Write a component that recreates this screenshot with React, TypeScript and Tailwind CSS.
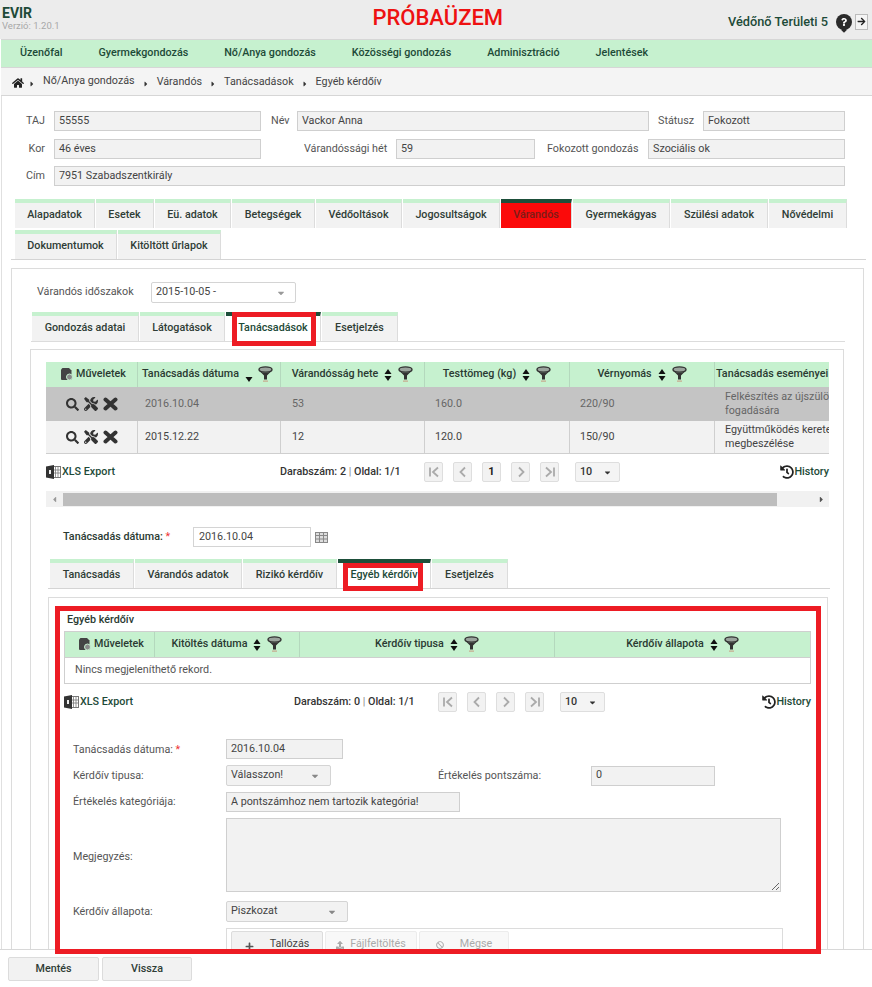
import React from "react";
import { FaHome, FaSearch, FaTools, FaHistory, FaPlus, FaUpload, FaBan, FaArrowRight, FaQuestion, FaCaretDown, FaCaretRight, FaCaretLeft } from "react-icons/fa";

const dark = "text-[#1d4a38]";

function Funnel() {
  return (
    <svg width="15" height="17" viewBox="0 0 15 17" className="shrink-0">
      <ellipse cx="7.5" cy="3.5" rx="6.5" ry="2.6" fill="#9aa39c" stroke="#333" strokeWidth="1.4" />
      <path d="M1.5 5 L6 9.5 V13.5 H9 V9.5 L13.5 5 Q7.5 8 1.5 5Z" fill="#333" />
      <rect x="5" y="14.6" width="5" height="1" fill="#c79a80" />
    </svg>
  );
}

function Sort({ only }: { only?: boolean }) {
  return (
    <svg width="8" height="14" viewBox="0 0 8 14" className="shrink-0">
      {!only && <path d="M4 1 L7.5 6 H0.5Z" fill="#111" />}
      <path d="M0.5 8 H7.5 L4 13Z" fill="#111" />
    </svg>
  );
}

function FileGear() {
  return (
    <svg width="12" height="13" viewBox="0 0 12 13" className="shrink-0">
      <path d="M0 1.5 L1.5 0 H8 L10.5 2.5 V12 H1 Q0 12 0 11Z" fill="#444" />
      <circle cx="8.5" cy="9" r="3" fill="#8a8a8a" stroke="#c6f1cf" strokeWidth="1" />
    </svg>
  );
}

function Excel() {
  return (
    <svg width="15" height="14" viewBox="0 0 15 14" className="shrink-0">
      <rect x="7" y="1.5" width="7.5" height="11" fill="#fff" stroke="#777" />
      <path d="M9.5 2 V12 M12 2 V12 M7 5 H14.5 M7 8 H14.5" stroke="#777" strokeWidth="0.8" />
      <path d="M0 1.5 L8 0 V14 L0 12.5Z" fill="#333" />
      <rect x="3" y="5" width="2" height="4" fill="#eee" />
    </svg>
  );
}

function Cross() {
  return (
    <svg width="15" height="14" viewBox="0 0 15 14" className="shrink-0">
      <path d="M2.5 2.5 L12.5 11.5 M12.5 2.5 L2.5 11.5" stroke="#333" strokeWidth="4" strokeLinecap="round" />
    </svg>
  );
}

function RO({ className, children }: { className: string; children: React.ReactNode }) {
  return (
    <div className={`h-[20px] shrink-0 flex items-center px-[4px] bg-[#f2f2f2] border border-[#cfcfcf] text-[10.75px] text-[#444] ${className}`}>
      {children}
    </div>
  );
}

function Sel({ className, children }: { className: string; children: React.ReactNode }) {
  return (
    <div className={`h-[21px] shrink-0 flex items-center justify-between pl-[4px] pr-[10px] bg-[#f2f2f2] border border-[#d4d4d4] rounded-[2px] text-[10.75px] text-[#444] ${className}`}>
      <span>{children}</span>
      <FaCaretDown className="text-[#888] text-[10px]" />
    </div>
  );
}

function Tab({ w, active, red, children }: { w: string; active?: boolean; red?: boolean; children: React.ReactNode }) {
  const bg = red ? "bg-[#fb0a0a] text-[#7c1c18]" : active ? "bg-white text-[#1d4a38]" : "bg-[#f2f2f2] text-[#2f3d36]";
  const top = red || active ? "border-t-[#1d4f3a]" : "border-t-[#c6f1cf]";
  return (
    <div className={`h-[29px] shrink-0 flex items-center justify-center border-t-[4px] border-r border-r-[#dcdcdc] font-medium text-[10.75px] ${w} ${bg} ${top}`}>
      {children}
    </div>
  );
}

function Head({ children, className, only }: { children: React.ReactNode; className?: string; only?: boolean }) {
  return (
    <div className={`flex items-center justify-center gap-[6px] bg-[#c6f1cf] border-r border-[#b4d8bd] font-medium text-[10.75px] text-[#2a3a32] whitespace-nowrap overflow-hidden ${className ?? ""}`}>
      <span>{children}</span>
      <Sort only={only} />
      <Funnel />
    </div>
  );
}

function OpsHead() {
  return (
    <div className="flex items-center justify-center gap-[3px] pl-[4px] bg-[#c6f1cf] border-r border-[#b4d8bd] font-medium text-[10.75px] text-[#2a3a32]">
      <FileGear />
      <span>Műveletek</span>
    </div>
  );
}

function Actions({ className }: { className: string }) {
  return (
    <div className={`flex items-center justify-center gap-[5px] text-[#333] ${className}`}>
      <FaSearch className="text-[13px]" />
      <FaTools className="text-[14px]" />
      <Cross />
    </div>
  );
}

function Chevrons({ kind }: { kind: "first" | "prev" | "next" | "last" }) {
  const d = {
    first: "M3 2.5 V11.5 M11 2.5 L6 7 L11 11.5",
    prev: "M9 2.5 L4.5 7 L9 11.5",
    next: "M5 2.5 L9.5 7 L5 11.5",
    last: "M11 2.5 V11.5 M3 2.5 L8 7 L3 11.5",
  }[kind];
  return (
    <svg width="14" height="14" viewBox="0 0 14 14">
      <path d={d} fill="none" stroke="#aaa" strokeWidth="1.8" />
    </svg>
  );
}

function PageBtn({ children }: { children: React.ReactNode }) {
  return (
    <div className="w-[19px] h-[20px] flex items-center justify-center bg-[#f2f2f2] border border-[#dedede] rounded-[2px] text-[11px] text-[#222] font-bold">
      {children}
    </div>
  );
}

function Pager({ count, offset }: { count: number; offset: string }) {
  return (
    <div className="h-[20px] flex items-center">
      <div className={`flex items-center gap-[1px] font-medium text-[10.75px] ${dark} ${offset}`}>
        <Excel />
        <span>XLS Export</span>
      </div>
      <div className="w-[144px] text-[10.75px] font-medium text-[#333] whitespace-nowrap">
        Darabszám: {count} <span className="font-normal text-[#888]">|</span> Oldal: 1/1
      </div>
      <div className="flex gap-[10px]">
        <PageBtn><Chevrons kind="first" /></PageBtn>
        <PageBtn><Chevrons kind="prev" /></PageBtn>
        {count > 0 && <PageBtn>1</PageBtn>}
        <PageBtn><Chevrons kind="next" /></PageBtn>
        <PageBtn><Chevrons kind="last" /></PageBtn>
      </div>
      <div className="ml-[16px] h-[20px] w-[45px] flex items-center justify-between px-[4px] bg-[#f4f4f4] border border-[#dedede] rounded-[2px] text-[10.75px] font-medium text-[#333]">
        <span>10</span>
        <FaCaretDown className="text-[9px] mr-[3px]" />
      </div>
      <div className={`ml-auto flex items-center font-medium text-[10.75px] ${dark}`}>
        <FaHistory className="text-[14px] text-[#222]" />
        <span>History</span>
      </div>
    </div>
  );
}

function Label({ className, children }: { className: string; children: React.ReactNode }) {
  return <div className={`shrink-0 text-[10.75px] text-[#555] whitespace-nowrap ${className}`}>{children}</div>;
}

function Crumb({ children }: { children: React.ReactNode }) {
  return (
    <>
      <FaCaretRight className="text-[8px] text-[#333] mx-[7px] mt-[3px] shrink-0" />
      <span className="whitespace-nowrap">{children}</span>
    </>
  );
}

function Footer() {
  return (
    <div className="absolute left-0 bottom-0 w-full h-[38px] z-10 bg-white border-t border-[#d8d8d8] flex items-center gap-[3px] pl-[8px] pt-[1px]">
      <div className="w-[91px] h-[24px] flex items-center justify-center bg-[#f2f2f2] border border-[#dcdcdc] rounded-[2px] font-medium text-[10.75px] text-[#2f3d36]">Mentés</div>
      <div className="w-[90px] h-[24px] flex items-center justify-center bg-[#f2f2f2] border border-[#dcdcdc] rounded-[2px] font-medium text-[10.75px] text-[#2f3d36]">Vissza</div>
    </div>
  );
}

function Marker({ className }: { className: string }) {
  return <div className={`absolute z-20 border-[#ed1c24] border-[5px] pointer-events-none ${className}`} />;
}

export default function App() {
  return (
    <div className="relative w-[872px] h-[987px] overflow-hidden bg-white font-['Roboto',sans-serif]">
      <div className="h-[39px] bg-[#ececec] relative flex items-start justify-between pl-[2px] pr-[4px]">
        <div className="pt-[5px]">
          <div className={`text-[14px] leading-[16px] font-bold ${dark}`}>EVIR</div>
          <div className="text-[9.5px] leading-[10px] text-[#a8a8a8]">Verzió: 1.20.1</div>
        </div>
        <div className="text-[22px] leading-[26px] font-medium text-[#ee1111] mt-[5px] ml-[88px]">PRÓBAÜZEM</div>
        <div className="flex items-center pt-[12px]">
          <span className={`text-[12.75px] font-medium ${dark}`}>Védőnő Területi 5</span>
          <div className="relative ml-[8px] w-[16px] h-[16px] rounded-full bg-[#2a2a2a] flex items-center justify-center">
            <FaQuestion className="text-[8px] text-white" />
            <span className="absolute -bottom-[2px] left-[6px] w-[4px] h-[4px] rotate-45 bg-[#2a2a2a]" />
          </div>
          <div className="ml-[3px] w-[13px] h-[16px] bg-[#f4f4f4] border border-[#bbb] flex items-center justify-center">
            <FaArrowRight className="text-[9px] text-[#222]" />
          </div>
        </div>
      </div>

      <div className="h-[29px] ml-[1px] bg-[#c6f1cf] border-y border-[#d6d6d6] flex items-center gap-[36px] pl-[19px] font-medium text-[10.75px] text-[#1d4a38]">
        <span>Üzenőfal</span>
        <span>Gyermekgondozás</span>
        <span>Nő/Anya gondozás</span>
        <span>Közösségi gondozás</span>
        <span>Adminisztráció</span>
        <span>Jelentések</span>
      </div>

      <div className="h-[28px] ml-[1px] pt-[2px] bg-[#f4f4f4] border-b border-[#d6d6d6] flex items-center pl-[11px] text-[10.75px] text-[#444]">
        <FaHome className="text-[12px] text-[#222] shrink-0 -mr-[3px]" />
        <Crumb>
          <span className="relative -top-[1px]">Nő/Anya gondozás</span>
        </Crumb>
        <Crumb>Várandós</Crumb>
        <Crumb>Tanácsadások</Crumb>
        <Crumb>Egyéb kérdőív</Crumb>
      </div>

      <div className="ml-[1px] border-l border-[#e0e0e0]">
        <div className="pt-[15px] flex items-center">
          <Label className="w-[43px] text-right">TAJ</Label>
          <RO className="ml-[9px] w-[207px]">55555</RO>
          <Label className="ml-[10px] w-[18px]">Név</Label>
          <RO className="ml-[8px] w-[352px]">Vackor Anna</RO>
          <Label className="ml-[9px] w-[36px]">Státusz</Label>
          <RO className="ml-[9px] w-[142px]">Fokozott</RO>
        </div>
        <div className="mt-[8px] flex items-center">
          <Label className="w-[43px] text-right">Kor</Label>
          <RO className="ml-[9px] w-[207px]">46 éves</RO>
          <Label className="ml-[43px] w-[83px]">Várandóssági hét</Label>
          <RO className="ml-[9px] w-[139px]">59</RO>
          <Label className="ml-[12px] w-[92px]">Fokozott gondozás</Label>
          <RO className="ml-[9px] w-[197px]">Szociális ok</RO>
        </div>
        <div className="mt-[7px] flex items-center">
          <Label className="w-[43px] text-right">Cím</Label>
          <RO className="ml-[9px] w-[791px]">7951 Szabadszentkirály</RO>
        </div>

        <div className="mt-[13px] ml-[13px] flex gap-[1px]">
          <Tab w="w-[80px]">Alapadatok</Tab>
          <Tab w="w-[58px]">Esetek</Tab>
          <Tab w="w-[76px]">Eü. adatok</Tab>
          <Tab w="w-[83px]">Betegségek</Tab>
          <Tab w="w-[86px]">Védőoltások</Tab>
          <Tab w="w-[97px]">Jogosultságok</Tab>
          <Tab w="w-[71px]" red>Várandós</Tab>
          <Tab w="w-[97px]">Gyermekágyas</Tab>
          <Tab w="w-[97px]">Szülési adatok</Tab>
          <Tab w="w-[78px]">Nővédelmi</Tab>
        </div>
        <div className="mt-[2px] ml-[9px] pl-[4px] mr-[6px] flex gap-[1px] border-b border-[#d4d4d4]">
          <Tab w="w-[102px]">Dokumentumok</Tab>
          <Tab w="w-[103px]">Kitöltött űrlapok</Tab>
        </div>

        <div className="mt-[8px] ml-[9px] mr-[8px] border border-[#dcdcdc] pl-[19px] pr-[18px] pt-[13px]">
          <div className="flex items-center">
            <Label className="ml-[6px] w-[114px]">Várandós időszakok</Label>
            <div className="h-[21px] w-[145px] flex items-center justify-between pl-[4px] pr-[9px] bg-white border border-[#d4d4d4] rounded-[2px] text-[10.75px] text-[#444]">
              <span>2015-10-05 -</span>
              <FaCaretDown className="text-[#999] text-[10px]" />
            </div>
          </div>
          <div className="mt-[9px] pl-[1px] flex gap-[1px] border-b border-[#dcdcdc]">
            <Tab w="w-[107px]">Gondozás adatai</Tab>
            <Tab w="w-[85px]">Látogatások</Tab>
            <Tab w="w-[95px]" active>Tanácsadások</Tab>
            <Tab w="w-[76px]">Esetjelzés</Tab>
          </div>

          <div className="mt-[7px] -ml-[1px] mr-[1px] border border-[#dcdcdc] pl-[15px] pr-[14px] pt-[12px]">
            <div className="overflow-hidden">
              <div className="w-[783px] grid grid-cols-[92px_143px_144px_145px_145px_114px] grid-rows-[25px_34px_33px] text-[10.75px]">
                <OpsHead />
                <div className="flex items-center gap-[3px] pl-[4px] bg-[#c6f1cf] border-r border-[#b4d8bd] font-medium text-[#2a3a32] whitespace-nowrap">
                  <span>Tanácsadás dátuma</span>
                  <span className="ml-[3px] mt-[3px]"><Sort only /></span>
                  <span className="ml-[2px]"><Funnel /></span>
                </div>
                <Head>Várandósság hete</Head>
                <Head>Testtömeg (kg)</Head>
                <Head>Vérnyomás</Head>
                <div className="flex items-center pl-[1px] bg-[#c6f1cf] font-medium text-[#2a3a32] whitespace-nowrap overflow-hidden">Tanácsadás eseményei</div>

                <Actions className="bg-[#c4c4c4]" />
                <div className="bg-[#c4c4c4] text-[#666] flex items-center pl-[7px]">2016.10.04</div>
                <div className="bg-[#c4c4c4] text-[#666] flex items-center pl-[11px]">53</div>
                <div className="bg-[#c4c4c4] text-[#666] flex items-center pl-[10px]">160.0</div>
                <div className="bg-[#c4c4c4] text-[#666] flex items-center pl-[10px]">220/90</div>
                <div className="bg-[#c4c4c4] text-[#666] flex items-center pl-[10px] leading-[14px] whitespace-nowrap overflow-hidden">Felkészítés az újszülött<br />fogadására</div>

                <Actions className="bg-[#f2f2f2] border-b border-r border-[#cfcfcf]" />
                <div className="bg-[#f2f2f2] text-[#444] flex items-center pl-[7px] border-b border-r border-[#cfcfcf]">2015.12.22</div>
                <div className="bg-[#f2f2f2] text-[#444] flex items-center pl-[11px] border-b border-r border-[#cfcfcf]">12</div>
                <div className="bg-[#f2f2f2] text-[#444] flex items-center pl-[10px] border-b border-r border-[#cfcfcf]">120.0</div>
                <div className="bg-[#f2f2f2] text-[#444] flex items-center pl-[10px] border-b border-r border-[#cfcfcf]">150/90</div>
                <div className="bg-[#f2f2f2] text-[#444] flex items-center pl-[10px] border-b border-[#cfcfcf] leading-[14px] whitespace-nowrap overflow-hidden">Együttműködés keretei<br />megbeszélése</div>
              </div>
            </div>

            <div className="mt-[8px]">
              <Pager count={2} offset="w-[234px]" />
            </div>

            <div className="mt-[9px] h-[16px] bg-[#f1f1f1] flex items-center text-[#555]">
              <div className="w-[17px] flex justify-center"><FaCaretLeft className="text-[9px] text-[#999]" /></div>
              <div className="w-[714px] h-[13px] bg-[#bdbdbd]" />
              <div className="flex-1 flex justify-end pr-[3px]"><FaCaretRight className="text-[9px]" /></div>
            </div>

            <div className="mt-[20px] flex items-center">
              <div className="ml-[17px] w-[130px] shrink-0 text-[10.75px] font-medium text-[#2a3a32] whitespace-nowrap">
                Tanácsadás dátuma: <span className="text-[#e33] font-normal">*</span>
              </div>
              <div className="h-[20px] w-[118px] flex items-center px-[5px] bg-white border border-[#d4d4d4] text-[10.75px] text-[#444]">2016.10.04</div>
              <svg width="13" height="12" viewBox="0 0 13 12" className="ml-[4px]">
                <rect x="0.5" y="1.5" width="12" height="10" fill="#ddd" stroke="#888" />
                <path d="M4.5 1 V11 M8.5 1 V11 M1 4.5 H12 M1 8 H12" stroke="#888" strokeWidth="1" />
              </svg>
            </div>

            <div className="mt-[12px] ml-[2px] pl-[2px] mr-[-1px] flex gap-[1px] border-b border-[#d4d4d4]">
              <Tab w="w-[84px]">Tanácsadás</Tab>
              <Tab w="w-[107px]">Várandós adatok</Tab>
              <Tab w="w-[94px]">Rizikó kérdőív</Tab>
              <Tab w="w-[93px]" active>Egyéb kérdőív</Tab>
              <Tab w="w-[76px]">Esetjelzés</Tab>
            </div>

            <div className="mt-[8px] ml-[2px] mr-[1px] border border-[#dcdcdc] pl-[15px] pr-[15px] pt-[16px] pb-[20px]">
              <div className="text-[10.75px] leading-[12px] font-medium text-[#2a3a32] ml-[3px]">Egyéb kérdőív</div>
              <div className="mt-[5px] w-[747px] border border-[#cfcfcf]">
                <div className="h-[26px] grid grid-cols-[90px_145px_255px_255px] bg-[#c6f1cf] border-b border-[#cfcfcf]">
                  <OpsHead />
                  <Head>Kitöltés dátuma</Head>
                  <Head>Kérdőív tipusa</Head>
                  <Head className="border-r-0">Kérdőív állapota</Head>
                </div>
                <div className="h-[25px] flex items-center pl-[10px] text-[10.75px] text-[#555]">Nincs megjeleníthető rekord.</div>
              </div>
              <div className="mt-[8px] w-[747px]">
                <Pager count={0} offset="w-[230px]" />
              </div>

              <div className="mt-[27px] ml-[9px] flex flex-col">
                <div className="flex items-center h-[20px]">
                  <Label className="w-[153px] pt-[2px]">Tanácsadás dátuma: <span className="text-[#e33]">*</span></Label>
                  <RO className="w-[117px] pt-[1px]">2016.10.04</RO>
                </div>
                <div className="flex items-center mt-[6px]">
                  <Label className="w-[153px] pt-[2px]">Kérdőív tipusa:</Label>
                  <Sel className="w-[105px]">Válasszon!</Sel>
                  <Label className="ml-[107px] w-[153px] pt-[2px]">Értékelés pontszáma:</Label>
                  <RO className="w-[124px]">0</RO>
                </div>
                <div className="flex items-center mt-[6px]">
                  <Label className="w-[153px]">Értékelés kategóriája:</Label>
                  <RO className="w-[234px]">A pontszámhoz nem tartozik kategória!</RO>
                </div>
                <div className="flex items-center mt-[6px]">
                  <Label className="w-[153px] pt-[4px]">Megjegyzés:</Label>
                  <div className="relative w-[555px] h-[74px] bg-[#f2f2f2] border border-[#cfcfcf]">
                    <svg width="9" height="9" viewBox="0 0 9 9" className="absolute right-0 bottom-0">
                      <path d="M1 8 L8 1 M5 8 L8 5" stroke="#666" strokeWidth="1" />
                    </svg>
                  </div>
                </div>
                <div className="flex items-center mt-[9px]">
                  <Label className="w-[153px] pt-[2px]">Kérdőív állapota:</Label>
                  <Sel className="w-[122px]">Piszkozat</Sel>
                </div>
                <div className="ml-[153px] mt-[6px] w-[557px] h-[60px] border border-[#dcdcdc] pt-[2px] pl-[4px] flex gap-[2px] items-start">
                  <div className="w-[92px] h-[26px] flex items-center justify-center gap-[16px] bg-[#f2f2f2] border border-[#dcdcdc] rounded-[2px] text-[10.75px] text-[#444]">
                    <FaPlus className="text-[9px] text-[#555] mt-[4px]" /><span>Tallózás</span>
                  </div>
                  <div className="w-[92px] h-[26px] flex items-center justify-center gap-[6px] bg-[#f8f8f8] border border-[#ececec] rounded-[2px] text-[10.75px] text-[#aaa]">
                    <FaUpload className="text-[8px] mt-[2px]" /><span>Fájlfeltöltés</span>
                  </div>
                  <div className="w-[90px] h-[26px] flex items-center justify-center gap-[16px] bg-[#f8f8f8] border border-[#ececec] rounded-[2px] text-[10.75px] text-[#aaa]">
                    <FaBan className="text-[8px] mt-[2px]" /><span>Mégse</span>
                  </div>
                </div>
              </div>
            </div>
          </div>
        </div>
      </div>

      <Footer />
      <Marker className="left-[232px] top-[312px] w-[84px] h-[34px]" />
      <Marker className="left-[343px] top-[563px] w-[80px] h-[28px]" />
      <Marker className="left-[55px] top-[606px] w-[766px] h-[348px]" />
    </div>
  );
}
